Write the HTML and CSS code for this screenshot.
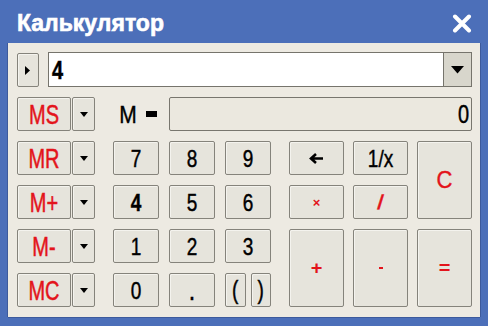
FILE: index.html
```html
<!DOCTYPE html>
<html>
<head>
<meta charset="utf-8">
<link rel="stylesheet" href="styles.css">
</head>
<body>
<div class="window">
  <div class="titlebar">
    <span class="title">Калькулятор</span>
    <svg class="close" width="20" height="19" viewBox="0 0 20 19"><path d="M3 2.5 L17 16.5 M17 2.5 L3 16.5" stroke="#fff" stroke-width="4" stroke-linecap="round"/></svg>
  </div>
  <div class="client">
    <div class="toprow">
      <div class="btn arrowbtn"><svg width="6" height="9" viewBox="0 0 6 9"><path d="M0 0 L5 4.5 L0 9 Z" fill="#000"/></svg></div>
      <div class="combo">
        <div class="entry"><span class="t bold">4</span></div>
        <div class="combodd"><svg width="13" height="8" viewBox="0 0 13 8"><path d="M0 0 H13 L6.5 7.5 Z" fill="#000"/></svg></div>
      </div>
    </div>
    <div class="keys">
      <div class="mem">
        <div class="mrow"><div class="btn mbtn red"><span class="t">MS</span></div><div class="btn dd"><svg width="8" height="5" viewBox="0 0 8 5"><path d="M0 0 H8 L4 5 Z" fill="#000"/></svg></div></div>
        <div class="mrow"><div class="btn mbtn red"><span class="t">MR</span></div><div class="btn dd"><svg width="8" height="5" viewBox="0 0 8 5"><path d="M0 0 H8 L4 5 Z" fill="#000"/></svg></div></div>
        <div class="mrow"><div class="btn mbtn red"><span class="t">M+</span></div><div class="btn dd"><svg width="8" height="5" viewBox="0 0 8 5"><path d="M0 0 H8 L4 5 Z" fill="#000"/></svg></div></div>
        <div class="mrow"><div class="btn mbtn red"><span class="t">M-</span></div><div class="btn dd"><svg width="8" height="5" viewBox="0 0 8 5"><path d="M0 0 H8 L4 5 Z" fill="#000"/></svg></div></div>
        <div class="mrow"><div class="btn mbtn red"><span class="t">MC</span></div><div class="btn dd"><svg width="8" height="5" viewBox="0 0 8 5"><path d="M0 0 H8 L4 5 Z" fill="#000"/></svg></div></div>
      </div>
      <div class="main">
        <div class="mlabel c1"><span class="t">M</span><span class="eq"></span></div>
        <div class="display"><span class="t">0</span></div>

        <div class="btn c1"><span class="t">7</span></div>
        <div class="btn c3"><span class="t">8</span></div>
        <div class="btn c5"><span class="t">9</span></div>
        <div class="btn c7"><svg width="15" height="11" viewBox="0 0 15 11"><path d="M14 5.5 H3 M7 1 L2 5.5 L7 10" stroke="#000" stroke-width="2.6" fill="none"/></svg></div>
        <div class="btn c9"><span class="t">1/x</span></div>
        <div class="btn c11 tall red"><span class="t big">C</span></div>

        <div class="btn c1"><span class="t bold">4</span></div>
        <div class="btn c3"><span class="t">5</span></div>
        <div class="btn c5"><span class="t">6</span></div>
        <div class="btn c7 red"><span class="star">×</span></div>
        <div class="btn c9 red"><span class="t slash">/</span></div>

        <div class="btn c1"><span class="t">1</span></div>
        <div class="btn c3"><span class="t">2</span></div>
        <div class="btn c5"><span class="t">3</span></div>
        <div class="btn c7 tall red"><span class="t op">+</span></div>
        <div class="btn c9 tall red"><span class="minus"></span></div>
        <div class="btn c11 tall red"><span class="t op">=</span></div>

        <div class="btn c1"><span class="t">0</span></div>
        <div class="btn c3"><span class="t dot">.</span></div>
        <div class="c5 parens">
          <div class="btn paren"><span class="t">(</span></div>
          <div class="btn paren"><span class="t">)</span></div>
        </div>
      </div>
    </div>
  </div>
</div>
</body>
</html>
```
FILE: styles.css
```css
html, body {
  margin: 0;
  padding: 0;
}
body {
  width: 488px;
  height: 326px;
  overflow: hidden;
  font-family: "Liberation Sans", Arial, sans-serif;
}
.window {
  width: 488px;
  height: 326px;
  background: #4c6fb9;
  display: flex;
  flex-direction: column;
  box-sizing: border-box;
}
.titlebar {
  height: 43px;
  flex: none;
  display: flex;
  align-items: center;
  justify-content: space-between;
  padding: 0 16px 0 17px;
  box-sizing: border-box;
}
.title {
  color: #fff;
  font-weight: bold;
  font-size: 23px;
  display: inline-block;
  transform: scaleY(1.08);
  margin-top: 2px;
  -webkit-text-stroke: 0.6px #fff;
}
.close {
  margin-top: 4px;
}
.client {
  flex: 1;
  margin: 0 8px 9px 8px;
  background: #edeae2;
  box-shadow: -1px 0 0 #3d5a9c, 1px 0 0 #3d5a9c, 0 1px 0 #3d5a9c;
  display: flex;
  flex-direction: column;
}
.btn {
  box-sizing: border-box;
  background: #e6e4dc;
  border: 1px solid #85837b;
  border-radius: 2px;
  box-shadow: inset 1px 1px 0 #f4f3ee;
  display: flex;
  align-items: center;
  justify-content: center;
  color: #000;
  font-size: 19px;
  height: 34px;
}
.red { color: #e3141b; }
.t {
  display: inline-block;
  transform: scaleY(1.25);
  line-height: 1;
  -webkit-text-stroke: 0.35px currentColor;
}
.bold { font-weight: bold; }
.toprow {
  display: flex;
  margin: 9px 8px 0 9px;
  height: 35px;
}
.arrowbtn {
  width: 22px;
  height: 34px;
  margin-top: 1px;
  margin-right: 9px;
}
.combo {
  flex: 1;
  display: flex;
}
.entry {
  flex: 1;
  background: #fff;
  border: 1px solid #76746c;
  border-right: none;
  box-sizing: border-box;
  display: flex;
  align-items: center;
  padding-left: 3px;
  font-size: 20px;
}
.combodd {
  width: 29px;
  box-sizing: border-box;
  background: #d8d6cc;
  border: 1px solid #76746c;
  display: flex;
  align-items: center;
  justify-content: center;
}
.keys {
  display: flex;
  margin-top: 10px;
  padding: 0 8px 0 9px;
}
.mem {
  display: flex;
  flex-direction: column;
  gap: 10px;
  margin-right: 18px;
}
.mrow {
  display: flex;
  gap: 1px;
}
.mbtn {
  width: 54px;
  font-size: 20px;
}
.mbtn .t { transform: scaleY(1.4); }
.dd {
  width: 23px;
}
.main {
  display: grid;
  grid-template-columns: 46px 10px 46px 10px 46px 18px 55px 9px 55px 9px 55px;
  grid-template-rows: repeat(5, 34px);
  row-gap: 10px;
}
.c1 { grid-column: 1; }
.c3 { grid-column: 3; }
.c5 { grid-column: 5; }
.c7 { grid-column: 7; }
.c9 { grid-column: 9; }
.c11 { grid-column: 11; }
.tall {
  grid-row: span 2;
  height: auto;
}
.mlabel {
  display: flex;
  align-items: center;
  justify-content: center;
  gap: 9px;
  font-size: 21px;
  padding-left: 4px;
}
.mlabel .t { transform: scaleY(1.15); }
.eq {
  width: 11px;
  height: 6px;
  background: #000;
}
.display {
  grid-column: 3 / 12;
  box-sizing: border-box;
  border: 1px solid #78766e;
  border-radius: 2px;
  background: #ebe8df;
  display: flex;
  align-items: center;
  justify-content: flex-end;
  padding-right: 2px;
  font-size: 20px;
}
.display .t { transform: scaleY(1.3); }
.big {
  font-size: 22px;
  transform: scaleY(1.1);
}
.op {
  font-size: 20px;
  font-weight: bold;
  transform: scaleY(0.9);
  -webkit-text-stroke: 0;
}
.star {
  font-size: 13px;
  font-weight: bold;
  line-height: 1;
}
.slash {
  font-weight: bold;
  font-size: 19px;
  transform: scaleY(1.05) skewX(-8deg);
}
.minus {
  width: 4px;
  height: 2px;
  background: #e3141b;
}
.dot {
  margin-top: 8px;
  font-weight: bold;
  font-size: 16px;
}
.parens {
  display: flex;
  gap: 5px;
}
.paren {
  flex: 1;
  font-size: 19px;
}
.paren .t { transform: scaleY(1.35); }
```
